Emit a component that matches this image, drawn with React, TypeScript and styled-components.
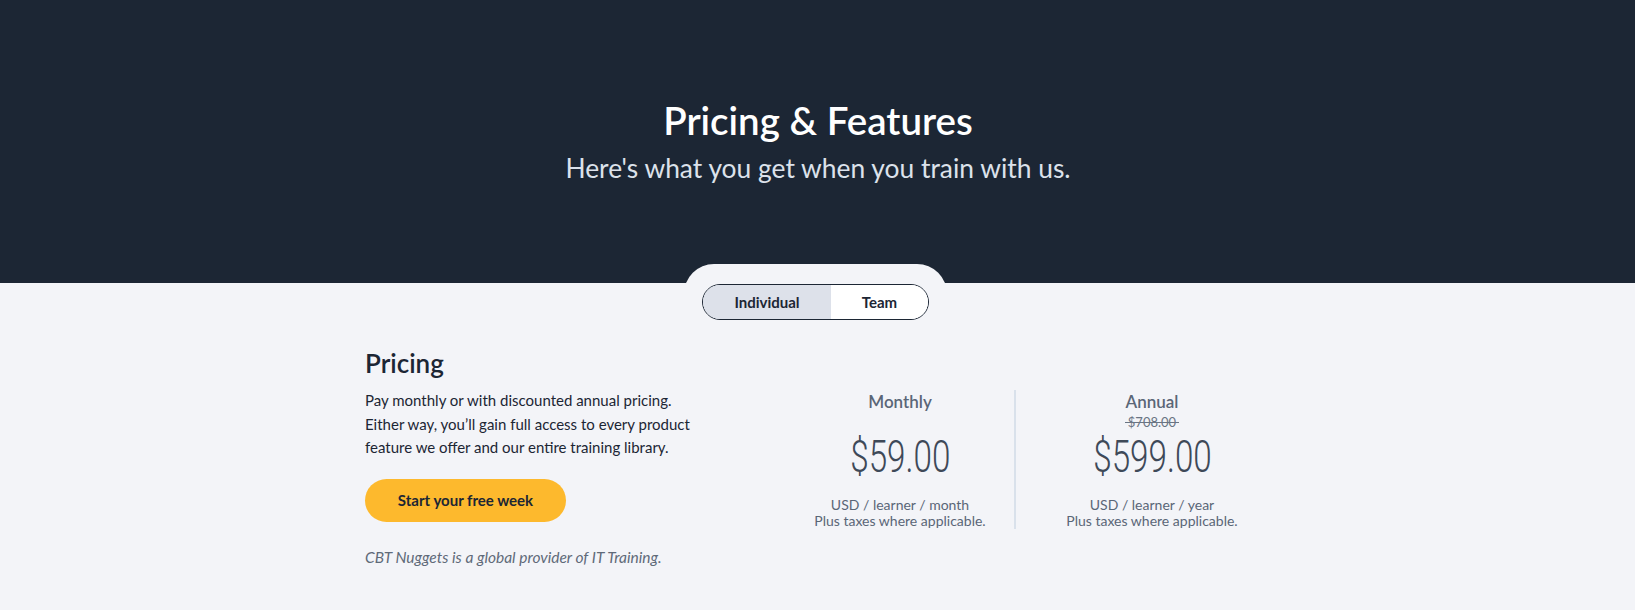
import styled, { createGlobalStyle } from 'styled-components';

const GlobalStyle = createGlobalStyle`
  body {
    margin: 0;
    background: #f3f4f8;
    font-family: Lato, "Open Sans", sans-serif;
    color: #1c2634;
  }
`;

const Hero = styled.section`
  background: #1c2634;
  height: 283px;
  display: flex;
  flex-direction: column;
  align-items: center;
  justify-content: center;
  padding: 0 0 2px 1px;
  box-sizing: border-box;
`;

const Title = styled.h1`
  margin: 0;
  color: #ffffff;
  font-size: 38.5px;
  font-weight: 600;
  line-height: 46px;
`;

const Subtitle = styled.p`
  margin: 8px 0 0;
  color: #dce2eb;
  font-size: 26.4px;
  line-height: 34px;
`;

const ToggleRow = styled.div`
  display: flex;
  justify-content: center;
  padding-right: 4px;
`;

const Notch = styled.div`
  background: #f3f4f8;
  margin-top: -19px;
  padding: 20px 18px 0;
  border-radius: 30px 30px 0 0;
`;

const Toggle = styled.div`
  display: flex;
  border: 1px solid #1c2634;
  border-radius: 18px;
  overflow: hidden;
  height: 34px;
`;

const ToggleButton = styled.button<{ $active?: boolean; $width: number }>`
  width: ${(p) => p.$width}px;
  border: 0;
  margin: 0;
  padding: 0;
  background: ${(p) => (p.$active ? '#dde1ea' : '#ffffff')};
  color: #1c2634;
  font-family: inherit;
  font-size: 15px;
  font-weight: 700;
  cursor: pointer;
`;

const Content = styled.div`
  max-width: 905px;
  margin: 28px auto 0;
  display: grid;
  grid-template-columns: 421px 228px 256px;
  align-items: start;
`;

const Intro = styled.div`
  display: flex;
  flex-direction: column;
  align-items: flex-start;
`;

const Heading = styled.h2`
  margin: 0;
  font-size: 26px;
  font-weight: 600;
  line-height: 30px;
  color: #1c2634;
`;

const Lead = styled.p`
  margin: 11px 0 0;
  max-width: 340px;
  font-size: 15px;
  line-height: 23.5px;
  color: #1c2634;
`;

const Cta = styled.button`
  margin-top: 19px;
  width: 201px;
  height: 43px;
  border: 0;
  border-radius: 22px;
  background: #fdb92d;
  color: #1c2634;
  font-family: inherit;
  font-size: 15px;
  font-weight: 700;
  cursor: pointer;
`;

const Note = styled.p`
  margin: 24px 0 0;
  font-size: 15.5px;
  line-height: 22px;
  font-style: italic;
  color: #5f6a79;
`;

const PriceColumn = styled.div<{ $divided?: boolean }>`
  margin-top: 42px;
  display: flex;
  flex-direction: column;
  align-items: center;
  padding-top: 2px;
  color: #5a6677;
  ${(p) => p.$divided && 'border-left: 2px solid #d9e1eb; padding-left: 18px;'}
`;

const PlanHead = styled.div`
  height: 38px;
  display: flex;
  flex-direction: column;
  align-items: center;
`;

const PlanName = styled.div`
  font-size: 17px;
  font-weight: 600;
  line-height: 20px;
`;

const WasPrice = styled.span`
  position: relative;
  margin-top: 2px;
  font-size: 13px;
  line-height: 16px;
  color: #6a7584;

  &::after {
    content: '';
    position: absolute;
    left: -3px;
    right: -3px;
    top: 8px;
    border-top: 1px solid #6a7584;
  }
`;

const Price = styled.div`
  margin-top: 5px;
  font-family: Roboto, "Liberation Sans", sans-serif;
  font-weight: 300;
  font-size: 44px;
  line-height: 44px;
  color: #3e4958;
  transform: scaleX(0.755);
`;

const Terms = styled.div`
  margin-top: 18px;
  font-size: 14px;
  line-height: 16px;
  text-align: center;
`;

export default function App() {
  return (
    <>
      <GlobalStyle />
      <Hero>
        <Title>Pricing &amp; Features</Title>
        <Subtitle>Here's what you get when you train with us.</Subtitle>
      </Hero>
      <ToggleRow>
        <Notch>
          <Toggle>
            <ToggleButton $active $width={128}>Individual</ToggleButton>
            <ToggleButton $width={97}>Team</ToggleButton>
          </Toggle>
        </Notch>
      </ToggleRow>
      <Content>
        <Intro>
          <Heading>Pricing</Heading>
          <Lead>
            Pay monthly or with discounted annual pricing. Either way, you’ll gain full access to every
            product feature we offer and our entire training library.
          </Lead>
          <Cta>Start your free week</Cta>
          <Note>CBT Nuggets is a global provider of IT Training.</Note>
        </Intro>
        <PriceColumn>
          <PlanHead>
            <PlanName>Monthly</PlanName>
          </PlanHead>
          <Price>$59.00</Price>
          <Terms>
            USD / learner / month
            <br />
            Plus taxes where applicable.
          </Terms>
        </PriceColumn>
        <PriceColumn $divided>
          <PlanHead>
            <PlanName>Annual</PlanName>
            <WasPrice>$708.00</WasPrice>
          </PlanHead>
          <Price>$599.00</Price>
          <Terms>
            USD / learner / year
            <br />
            Plus taxes where applicable.
          </Terms>
        </PriceColumn>
      </Content>
    </>
  );
}
